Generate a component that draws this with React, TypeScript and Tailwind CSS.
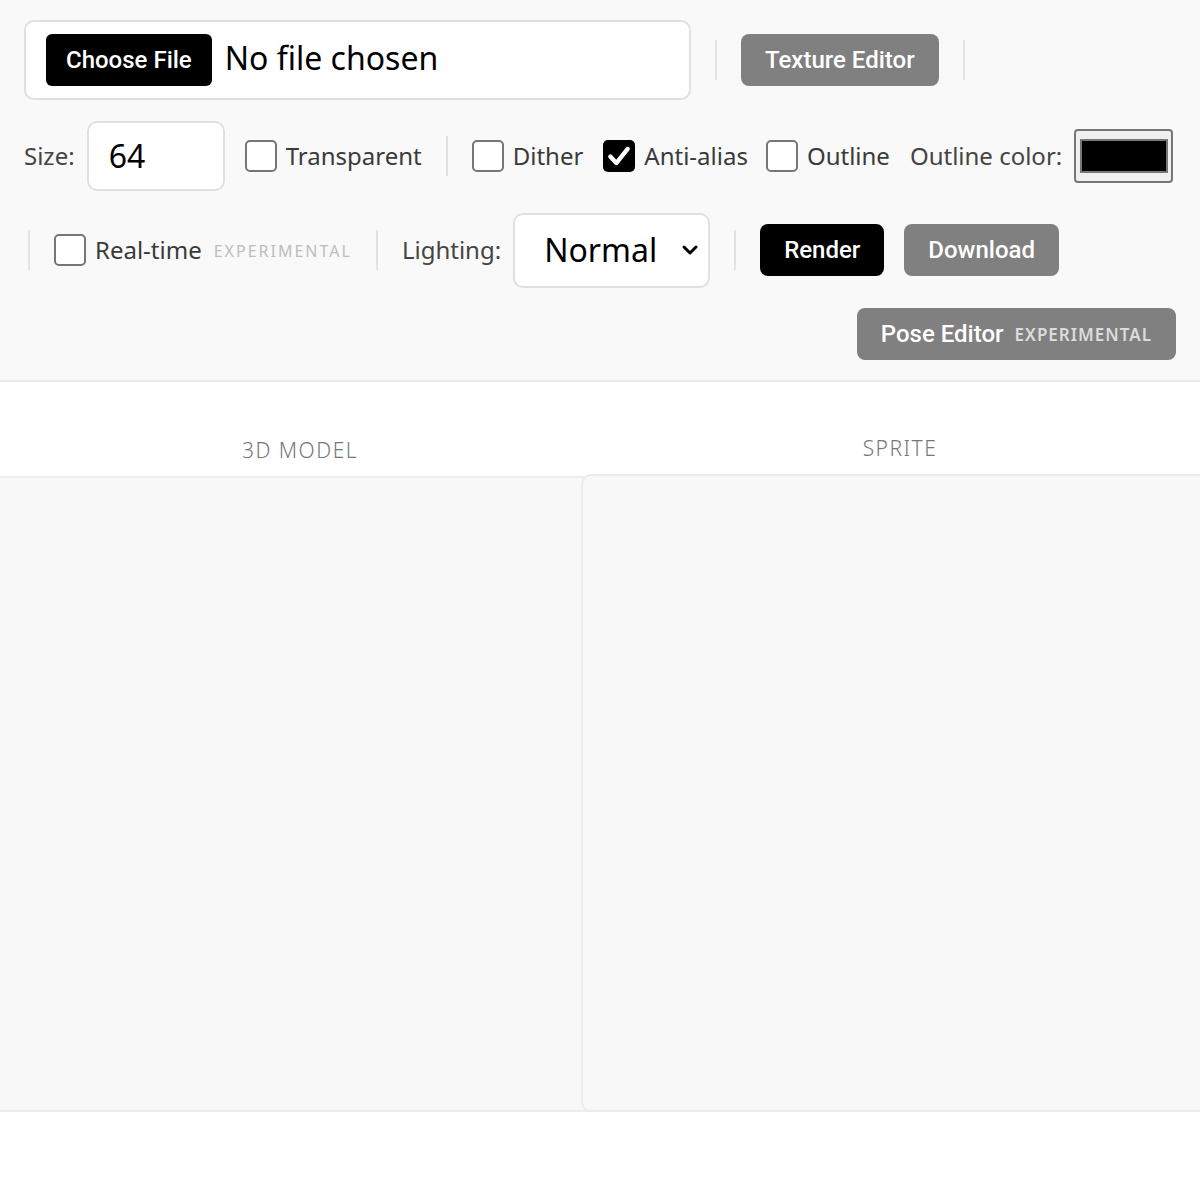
import React, { useState } from 'react';

const noto = "font-['Noto_Sans','Open_Sans',sans-serif]";
const roboto = "font-['Roboto','Liberation_Sans',sans-serif]";

const Sep = () => <div className="w-[2px] h-[40px] bg-[#e2e2e2] mx-1 shrink-0" />;

const Check: React.FC<{ label: string; checked?: boolean; extra?: string }> = ({ label, checked, extra }) => {
  const [on, setOn] = useState(!!checked);
  return (
    <label className="flex items-center gap-[9px] cursor-pointer select-none" onClick={() => setOn(!on)}>
      {on ? (
        <span className="w-[32px] h-[32px] rounded-[5px] bg-black flex items-center justify-center shrink-0">
          <svg width="26" height="26" viewBox="0 0 24 24">
            <path d="M4 12.5 L9.5 18.5 L20 5.5" fill="none" stroke="white" strokeWidth="4" strokeLinecap="round" strokeLinejoin="round" />
          </svg>
        </span>
      ) : (
        <span className="w-[32px] h-[32px] rounded-[5px] border-2 border-[#767676] bg-white shrink-0" />
      )}
      <span className={`${noto} text-[24px] text-[#3a3a3a]`}>{label}</span>
      {extra && <span className={`${noto} text-[16px] tracking-[2px] text-[#bdbdbd] ml-[3px] mt-[2px]`}>{extra}</span>}
    </label>
  );
};

const GrayBtn: React.FC<{ children: React.ReactNode }> = ({ children }) => (
  <button className={`${roboto} h-[52px] px-6 rounded-[8px] bg-[#808080] text-white text-[24px] font-medium flex items-center`}>
    {children}
  </button>
);

export default function App() {
  return (
    <div className="min-h-[1200px] w-[1200px] bg-white overflow-hidden">
      <div className="bg-[#f9f9f9] border-b-2 border-[#ececec] pt-5 pb-5 pl-6 pr-6 flex flex-col gap-5">
        {/* file + texture editor */}
        <div className="flex items-center gap-5 h-[80px]">
          <div className="w-[667px] h-[80px] bg-white border-2 border-[#e0e0e0] rounded-[10px] flex items-center px-5">
            <span className={`${roboto} h-[52px] px-5 bg-black text-white rounded-[6px] text-[24px] font-medium flex items-center`}>Choose File</span>
            <span className={`${noto} text-[32px] text-black ml-[13px] -mt-[5px]`}>No file chosen</span>
          </div>
          <Sep />
          <GrayBtn>Texture Editor</GrayBtn>
          <Sep />
        </div>

        {/* render options */}
        <div className="flex items-center gap-5 h-[72px]">
          <div className="flex items-center gap-3">
            <span className={`${noto} text-[24px] text-[#444]`}>Size:</span>
            <div className={`${noto} w-[138px] h-[70px] bg-white border-2 border-[#e0e0e0] rounded-[10px] flex items-center pl-5 text-[32px] text-black`}>64</div>
          </div>
          <Check label="Transparent" />
          <Sep />
          <Check label="Dither" />
          <Check label="Anti-alias" checked />
          <div className="-ml-[2px]">
            <Check label="Outline" />
          </div>
          <div className="flex items-center gap-3">
            <span className={`${noto} text-[24px] text-[#444]`}>Outline color:</span>
            <div className="w-[99px] h-[54px] bg-[#efefef] border-2 border-[#767676] rounded-[4px] flex items-center justify-center">
              <div className="w-[88px] h-[34px] bg-black border-2 border-[#777]" />
            </div>
          </div>
        </div>

        <div className="flex items-center gap-5 h-[76px]">
          <Sep />
          <Check label="Real-time" extra="EXPERIMENTAL" />
          <Sep />
          <div className="flex items-center gap-3">
            <span className={`${noto} text-[24px] text-[#444]`}>Lighting:</span>
            <div className={`${noto} w-[197px] h-[75px] bg-white border-2 border-[#e0e0e0] rounded-[10px] flex items-center pl-[29px] pr-[8px] text-[32px] text-black`}>
              <span className="flex-1">Normal</span>
              <svg width="18" height="12" viewBox="0 0 18 12" className="mr-[1px]">
                <path d="M3 3 L9 9 L15 3" fill="none" stroke="black" strokeWidth="3" strokeLinecap="round" strokeLinejoin="round" />
              </svg>
            </div>
          </div>
          <Sep />
          <button className={`${roboto} h-[52px] px-6 rounded-[8px] bg-black text-white text-[24px] font-medium flex items-center`}>Render</button>
          <GrayBtn>Download</GrayBtn>
        </div>

        <div className="flex justify-end h-[52px]">
          <button className={`${roboto} h-[52px] pl-6 pr-6 rounded-[8px] bg-[#808080] text-white text-[24px] font-medium flex items-center gap-[11px]`}>
            <span>Pose Editor</span>
            <span className={`${noto} text-[17px] font-semibold tracking-[1px] text-[#dcdcdc] mt-[2px]`}>EXPERIMENTAL</span>
          </button>
        </div>
      </div>

      {/* previews */}
      <div className="flex">
        <div className="w-[600px] flex flex-col shrink-0">
          <div className={`${noto} h-[94px] flex items-end justify-center pb-[10px] text-[21px] tracking-[1.5px] text-[#777] font-light`}>3D MODEL</div>
          <div className="w-[590px] h-[636px] bg-[#f8f8f8] border-y-2 border-[#ececec]" />
        </div>
        <div className="w-[600px] flex flex-col shrink-0">
          <div className={`${noto} h-[92px] flex items-end justify-center pb-[10px] text-[21px] tracking-[1.5px] text-[#777] font-light`}>SPRITE</div>
          <div className="-ml-[19px] w-[640px] h-[638px] bg-[#f8f8f8] border-2 border-[#ececec] rounded-[10px] relative" />
        </div>
      </div>
    </div>
  );
}
